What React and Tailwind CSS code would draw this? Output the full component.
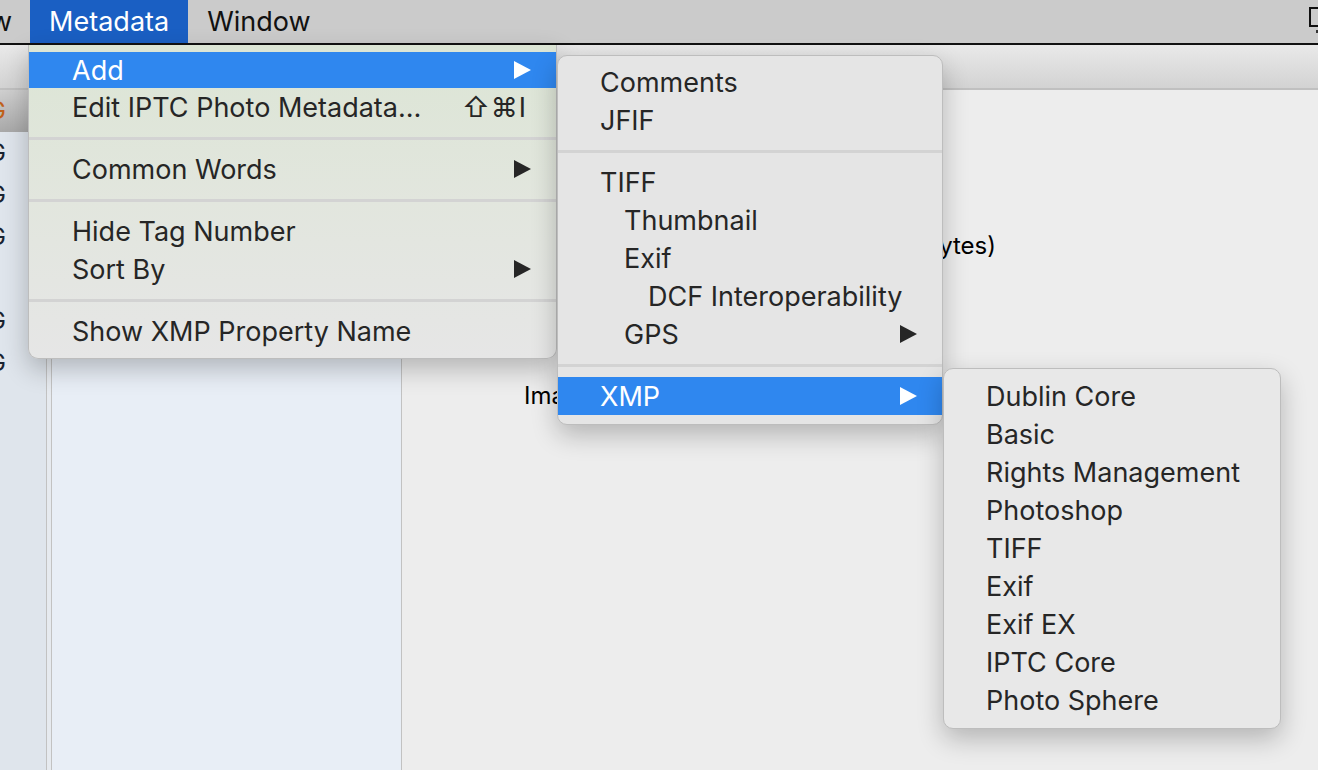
import React from "react";

const Arrow = () => (
  <svg width="17" height="18" viewBox="0 0 17 18" className="shrink-0">
    <path d="M0 0 L17 9 L0 18 Z" fill="currentColor" />
  </svg>
);

const indentClass = ["pl-[42px]", "pl-[66px]", "pl-[90px]"];

function Row({ label, indent = 0, arrow, shortcut, active, first, main }) {
  const pl = main ? "pl-[43px]" : indentClass[indent];
  return (
    <div
      className={`flex items-center pr-[25px] ${pl} ${first ? "h-[36px]" : "h-[38px]"} ${
        active ? "bg-[#2f87ef] text-white" : "text-[#262626]"
      }`}
    >
      <span className="flex-1 whitespace-nowrap">{label}</span>
      {shortcut && <span className="pr-[4px] tracking-[1px]">{shortcut}</span>}
      {arrow && <Arrow />}
    </div>
  );
}

const Sep = () => (
  <div className="h-[24px] flex items-center">
    <div className="h-[3px] w-full bg-[#d3d3d3]" />
  </div>
);

export default function App() {
  return (
    <div className="relative w-[1318px] h-[770px] overflow-hidden bg-[#ededed] [font-family:Inter,'Noto_Sans',sans-serif] text-[27px] leading-none">
      {/* Menu bar */}
      <div className="h-[45px] flex items-stretch bg-[#cbcbcb] border-b-2 border-[#111] overflow-hidden text-[27px] text-[#111]">
        <div className="flex items-center">
          <span className="-ml-[10px]">w</span>
        </div>
        <div className="ml-[18px] flex items-center px-[19px] bg-[#1a5fc3] text-white">Metadata</div>
        <div className="flex items-center px-[19px]">Window</div>
        <div className="ml-auto mr-[-12px] mt-[7px] flex flex-col items-start">
          <div className="w-[21px] h-[20px] border-2 border-[#111]" />
          <div className="ml-[7px] mt-[3px] w-[3px] h-[3px] bg-[#333]" />
        </div>
      </div>

      {/* Toolbar band */}
      <div className="h-[45px] bg-gradient-to-b from-[#e9e9e9] to-[#d3d3d3] border-b-2 border-[#c0c0c0]" />

      {/* Body */}
      <div className="flex h-[680px]">
        <div className="w-[47px] bg-[#dfe5ec] border-r border-[#c2c2c2] flex flex-col text-[24px] text-[#1a2330] overflow-hidden">
          <div className="h-[42px] flex items-center bg-gradient-to-b from-[#cfcfcf] to-[#a9a9a9]">
            <span className="-ml-[12px] text-[#c0601a]">G</span>
          </div>
          <div className="h-[42px] flex items-center"><span className="-ml-[12px]">G</span></div>
          <div className="h-[42px] flex items-center"><span className="-ml-[12px]">G</span></div>
          <div className="h-[42px] flex items-center"><span className="-ml-[12px]">G</span></div>
          <div className="h-[42px]" />
          <div className="h-[42px] flex items-center"><span className="-ml-[12px]">G</span></div>
          <div className="h-[42px] flex items-center"><span className="-ml-[12px]">G</span></div>
        </div>
        <div className="w-[4px] bg-[#e6eaef]" />
        <div className="w-[351px] bg-[#e8eef6] border-l border-r border-[#c2c2c2]" />
        <div className="flex-1 bg-[#ededed] flex flex-col text-[24px] text-black">
          <div className="mt-[144px] w-[594px] text-right whitespace-nowrap">File Size: 2.2 MB (2,207,744 bytes)</div>
          <div className="mt-[126px] pl-[122px] whitespace-nowrap">Image Width</div>
        </div>
      </div>

      {/* Main Metadata menu */}
      <div className="absolute left-[28px] top-[45px] w-[529px] pt-[7px] pb-[8px] rounded-b-[10px] bg-gradient-to-b from-[#dce5d5] via-[#e2e6de] to-[#e6e6e6] border border-t-0 border-[#bdbdbd] shadow-[0_10px_26px_rgba(0,0,0,0.24)]">
        <Row main first active label="Add" arrow />
        <Row main label="Edit IPTC Photo Metadata…" shortcut="⇧⌘I" />
        <Sep />
        <Row main label="Common Words" arrow />
        <Sep />
        <Row main label="Hide Tag Number" />
        <Row main label="Sort By" arrow />
        <Sep />
        <Row main label="Show XMP Property Name" />
      </div>

      {/* Add submenu */}
      <div className="absolute left-[557px] top-[55px] w-[386px] pt-[7px] pb-[9px] rounded-[10px] bg-[#e5e5e5] border border-[#bdbdbd] shadow-[0_10px_26px_rgba(0,0,0,0.24)]">
        <Row label="Comments" />
        <Row label="JFIF" />
        <Sep />
        <Row label="TIFF" />
        <Row label="Thumbnail" indent={1} />
        <Row label="Exif" indent={1} />
        <Row label="DCF Interoperability" indent={2} />
        <Row label="GPS" indent={1} arrow />
        <Sep />
        <Row label="XMP" active arrow />
      </div>

      {/* XMP submenu */}
      <div className="absolute left-[943px] top-[368px] w-[338px] pt-[8px] pb-[9px] rounded-[10px] bg-[#e8e8e8] border border-[#bdbdbd] shadow-[0_10px_26px_rgba(0,0,0,0.24)]">
        <Row label="Dublin Core" />
        <Row label="Basic" />
        <Row label="Rights Management" />
        <Row label="Photoshop" />
        <Row label="TIFF" />
        <Row label="Exif" />
        <Row label="Exif EX" />
        <Row label="IPTC Core" />
        <Row label="Photo Sphere" />
      </div>
    </div>
  );
}
